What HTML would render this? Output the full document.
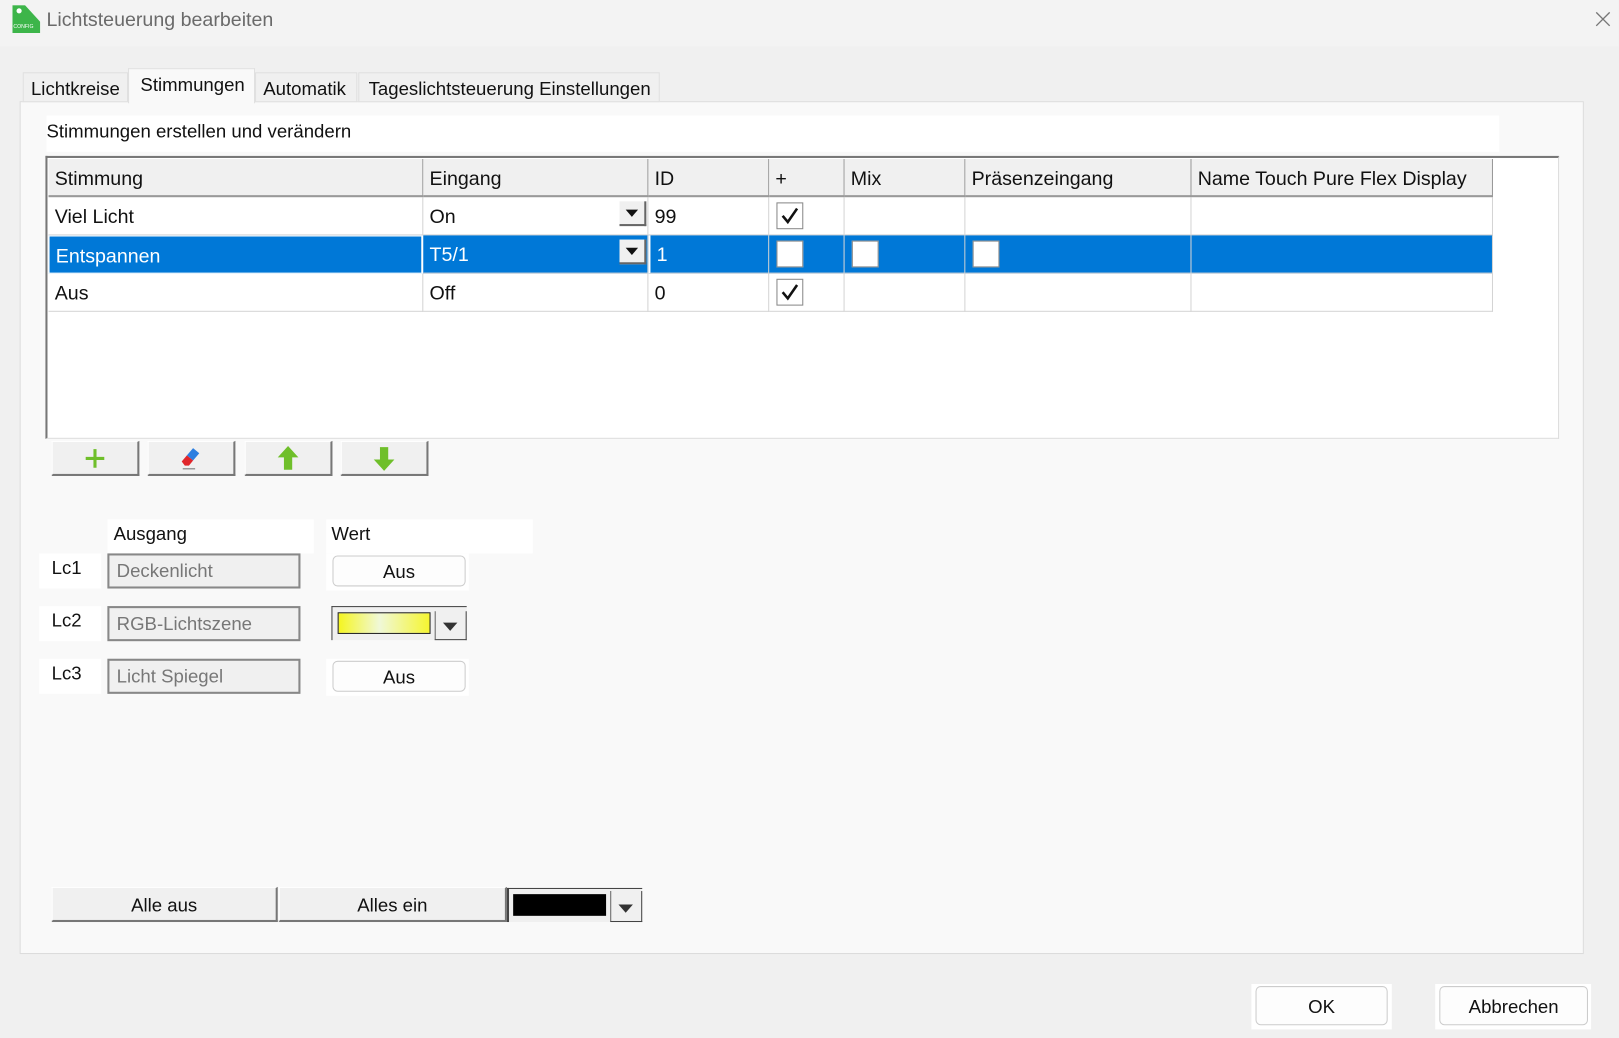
<!DOCTYPE html>
<html><head><meta charset="utf-8"><style>
*{box-sizing:border-box;margin:0;padding:0}
body{width:1619px;height:1038px;overflow:hidden;background:#f0f0f0;font-family:"Liberation Sans",sans-serif}
#w{position:absolute;left:0;top:0;width:1568px;height:1005px;transform:scale(1.0325);transform-origin:0 0;background:#f0f0f0}
.a{position:absolute}
.t{font-size:18px;color:#111;white-space:nowrap}
.cell{position:absolute;font-size:19px;color:#111;padding-left:6px;padding-top:4px;display:flex;align-items:center;border-right:1px solid #d4d4d4;border-bottom:1px solid #d4d4d4}
.hd{background:#f0f0f0;border-right:1px solid #999;border-bottom:2px solid #999}
.sel{background:#0078d7;color:#fff}
.btn{position:absolute;background:#f0f0f0;border-right:2px solid #777;border-bottom:2px solid #777;border-top:1px solid #fff;border-left:1px solid #fff;display:flex;align-items:center;justify-content:center;font-size:18px;color:#111}
.rb{position:absolute;background:#fdfdfd;border:1px solid #ccc;border-radius:5px;display:flex;align-items:center;justify-content:center;font-size:18px;color:#111;padding-top:3px}
.cb{position:absolute;width:26px;height:26px;border:1px solid #888;background:#fff}
.tb{position:absolute;background:#f0f0f0;border:2px solid #888;color:#777;font-size:18px;padding-left:7px;display:flex;align-items:center}
.dd{position:absolute;width:26px;height:24px;background:#f0f0f0;border-right:2px solid #666;border-bottom:2px solid #666}
.dd:after{content:"";position:absolute;left:6px;top:8px;border-left:6px solid transparent;border-right:6px solid transparent;border-top:7px solid #111}
</style></head><body><div id="w">
<div class="a" style="left:0;top:0;width:1568px;height:45px;background:#f3f3f3"></div>
<div class="a" style="left:12px;top:5px;width:27px;height:27px;background:#3db54a;clip-path:polygon(0 0,45% 0,100% 60%,100% 100%,0 100%)"></div>
<div class="a" style="left:13px;top:23px;font-size:5px;color:#fff">CONFIG</div>
<div class="a" style="left:16px;top:8px;width:5px;height:5px;border-radius:50%;background:#fff"></div>
<div class="a" style="left:45px;top:9px;font-size:19px;color:#6a6a6a">Lichtsteuerung bearbeiten</div>
<svg class="a" style="left:1545px;top:11px" width="15" height="15"><path d="M1 1L14 14M14 1L1 14" stroke="#777" stroke-width="1.3"/></svg>

<div class="a" style="left:19px;top:98px;width:1515px;height:826px;background:#f9f9f9;border:1px solid #dcdcdc"></div>
<div class="a t" style="left:22px;top:70px;width:102px;height:29px;background:#f0f0f0;border:1px solid #e0e0e0;padding:5px 0 0 7px">Lichtkreise</div>
<div class="a t" style="left:124px;top:66px;width:123px;height:34px;background:#f9f9f9;border:1px solid #e0e0e0;border-bottom:none;padding:5px 0 0 11px">Stimmungen</div>
<div class="a t" style="left:247px;top:70px;width:99px;height:29px;background:#f0f0f0;border:1px solid #e0e0e0;padding:5px 0 0 7px">Automatik</div>
<div class="a t" style="left:347px;top:70px;width:292px;height:29px;background:#f0f0f0;border:1px solid #e0e0e0;padding:5px 0 0 9px">Tageslichtsteuerung Einstellungen</div>

<div class="a t" style="left:45px;top:112px;width:1407px;height:35px;background:#fff;padding-top:5px">Stimmungen erstellen und verändern</div>

<div class="a" style="left:44px;top:151px;width:1466px;height:274px;background:#fff;border-top:2px solid #777;border-left:2px solid #777;border-bottom:1px solid #ddd;border-right:1px solid #ddd"></div>
<div class="cell hd" style="left:47px;top:154px;width:363px;height:37px">Stimmung</div>
<div class="cell hd" style="left:410px;top:154px;width:218px;height:37px">Eingang</div>
<div class="cell hd" style="left:628px;top:154px;width:117px;height:37px">ID</div>
<div class="cell hd" style="left:745px;top:154px;width:73px;height:37px">+</div>
<div class="cell hd" style="left:818px;top:154px;width:117px;height:37px">Mix</div>
<div class="cell hd" style="left:935px;top:154px;width:219px;height:37px">Präsenzeingang</div>
<div class="cell hd" style="left:1154px;top:154px;width:292px;height:37px">Name Touch Pure Flex Display</div>

<div class="cell" style="left:47px;top:191px;width:363px;height:37px">Viel Licht</div>
<div class="cell" style="left:410px;top:191px;width:218px;height:37px">On</div>
<div class="cell" style="left:628px;top:191px;width:117px;height:37px">99</div>
<div class="cell" style="left:745px;top:191px;width:73px;height:37px"></div>
<div class="cell" style="left:818px;top:191px;width:117px;height:37px"></div>
<div class="cell" style="left:935px;top:191px;width:219px;height:37px"></div>
<div class="cell" style="left:1154px;top:191px;width:292px;height:37px"></div>

<div class="cell sel" style="left:47px;top:228px;width:363px;height:37px;border:1px solid #fff;border-right:2px solid #fff">Entspannen</div>
<div class="cell sel" style="left:410px;top:228px;width:218px;height:37px">T5/1</div>
<div class="cell sel" style="left:628px;top:228px;width:117px;height:37px;border-left:2px solid #fff">1</div>
<div class="cell sel" style="left:745px;top:228px;width:73px;height:37px"></div>
<div class="cell sel" style="left:818px;top:228px;width:117px;height:37px"></div>
<div class="cell sel" style="left:935px;top:228px;width:219px;height:37px"></div>
<div class="cell sel" style="left:1154px;top:228px;width:292px;height:37px"></div>

<div class="cell" style="left:47px;top:265px;width:363px;height:37px">Aus</div>
<div class="cell" style="left:410px;top:265px;width:218px;height:37px">Off</div>
<div class="cell" style="left:628px;top:265px;width:117px;height:37px">0</div>
<div class="cell" style="left:745px;top:265px;width:73px;height:37px"></div>
<div class="cell" style="left:818px;top:265px;width:117px;height:37px"></div>
<div class="cell" style="left:935px;top:265px;width:219px;height:37px"></div>
<div class="cell" style="left:1154px;top:265px;width:292px;height:37px"></div>

<div class="dd" style="left:600px;top:195px"></div>
<div class="dd" style="left:600px;top:232px"></div>
<div class="cb" style="left:752px;top:196px"><svg width="24" height="24"><path d="M5 12 L10 18 L19 5" stroke="#111" stroke-width="2.5" fill="none"/></svg></div>
<div class="cb" style="left:752px;top:233px"></div>
<div class="cb" style="left:825px;top:233px"></div>
<div class="cb" style="left:942px;top:233px"></div>
<div class="cb" style="left:752px;top:270px"><svg width="24" height="24"><path d="M5 12 L10 18 L19 5" stroke="#111" stroke-width="2.5" fill="none"/></svg></div>

<div class="btn" style="left:50px;top:427px;width:85px;height:34px"><svg width="22" height="22"><path d="M11 2V20M2 11H20" stroke="#6fbf2a" stroke-width="3"/></svg></div>
<div class="btn" style="left:143px;top:427px;width:85px;height:34px"><svg width="24" height="24"><path d="M14 2 L20 7 L14 14 L8 9Z" fill="#2d7fe0"/><path d="M8 9 L14 14 L10 19 L6 19 L3 15Z" fill="#e0262b"/><path d="M4 22H16" stroke="#999" stroke-width="1.5"/></svg></div>
<div class="btn" style="left:237px;top:427px;width:85px;height:34px"><svg width="24" height="26"><path d="M12 1 L22 12 H16 V24 H8 V12 H2Z" fill="#6fbf2a"/></svg></div>
<div class="btn" style="left:330px;top:427px;width:85px;height:34px"><svg width="24" height="26"><path d="M12 25 L22 14 H16 V2 H8 V14 H2Z" fill="#6fbf2a"/></svg></div>

<div class="a t" style="left:104px;top:503px;width:200px;height:33px;background:#fff;padding:4px 0 0 6px">Ausgang</div>
<div class="a t" style="left:316px;top:503px;width:200px;height:33px;background:#fff;padding:4px 0 0 5px">Wert</div>

<div class="a t" style="left:38px;top:536px;width:60px;height:34px;background:#fff;padding:4px 0 0 12px">Lc1</div>
<div class="tb" style="left:104px;top:536px;width:187px;height:34px">Deckenlicht</div>
<div class="a" style="left:316px;top:536px;width:138px;height:36px;background:#fff"></div>
<div class="rb" style="left:322px;top:538px;width:129px;height:30px">Aus</div>

<div class="a t" style="left:38px;top:587px;width:60px;height:34px;background:#fff;padding:4px 0 0 12px">Lc2</div>
<div class="tb" style="left:104px;top:587px;width:187px;height:34px">RGB-Lichtszene</div>
<div class="a" style="left:321px;top:587px;width:131px;height:33px;border-left:1px solid #444;border-top:1px solid #444;background:#f0f0f0"></div>
<div class="a" style="left:327px;top:593px;width:90px;height:21px;border:1px solid #222;background:linear-gradient(90deg,#f5f520,#f0f8d8 45%,#f5f530)"></div>
<div class="a" style="left:421px;top:592px;width:31px;height:28px;background:#f0f0f0;border-left:1px solid #666;border-right:1px solid #444;border-bottom:1px solid #444"></div>
<div class="a" style="left:429px;top:603px;border-left:7px solid transparent;border-right:7px solid transparent;border-top:8px solid #333"></div>

<div class="a t" style="left:38px;top:638px;width:60px;height:34px;background:#fff;padding:4px 0 0 12px">Lc3</div>
<div class="tb" style="left:104px;top:638px;width:187px;height:34px">Licht Spiegel</div>
<div class="a" style="left:316px;top:638px;width:138px;height:36px;background:#fff"></div>
<div class="rb" style="left:322px;top:640px;width:129px;height:30px">Aus</div>

<div class="btn" style="left:50px;top:859px;width:219px;height:34px;padding-top:3px">Alle aus</div>
<div class="btn" style="left:270px;top:859px;width:221px;height:34px;padding-top:3px">Alles ein</div>
<div class="a" style="left:491px;top:860px;width:131px;height:33px;border-left:2px solid #444;border-top:1px solid #444;background:#f0f0f0"></div>
<div class="a" style="left:497px;top:866px;width:90px;height:21px;background:#000"></div>
<div class="a" style="left:591px;top:863px;width:31px;height:30px;background:#f0f0f0;border-left:1px solid #666;border-right:1px solid #444;border-bottom:1px solid #444"></div>
<div class="a" style="left:599px;top:876px;border-left:7px solid transparent;border-right:7px solid transparent;border-top:8px solid #333"></div>

<div class="a" style="left:1212px;top:953px;width:136px;height:44px;background:#fff"></div>
<div class="rb" style="left:1216px;top:955px;width:128px;height:38px">OK</div>
<div class="a" style="left:1390px;top:953px;width:151px;height:44px;background:#fff"></div>
<div class="rb" style="left:1394px;top:955px;width:144px;height:38px">Abbrechen</div>
</div></body></html>
